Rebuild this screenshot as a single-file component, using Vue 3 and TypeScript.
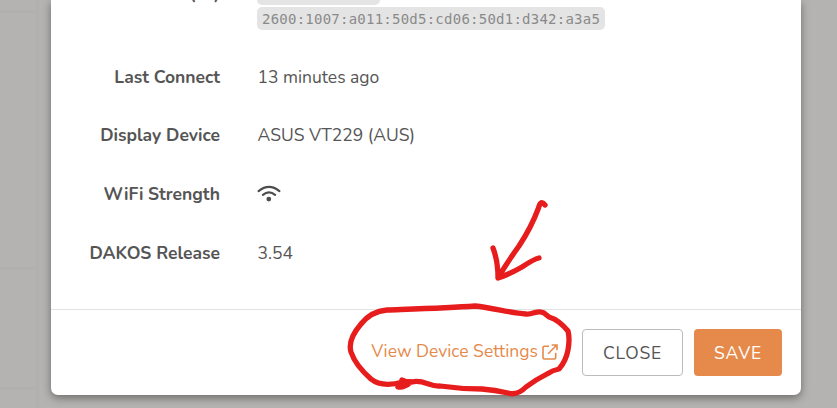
<script setup lang="ts">
interface Row {
  label: string
  value?: string
  key: string
}

const rows: Row[] = [
  { key: 'connect', label: 'Last Connect', value: '13 minutes ago' },
  { key: 'display', label: 'Display Device', value: 'ASUS VT229 (AUS)' },
  { key: 'wifi', label: 'WiFi Strength' },
  { key: 'release', label: 'DAKOS Release', value: '3.54' },
]
const address = '2600:1007:a011:50d5:cd06:50d1:d342:a3a5'
</script>

<template>
  <main class="page">
    <aside class="backdrop">
      <div class="tile first"></div>
      <div class="tile tall"></div>
      <div class="tile middle"></div>
      <div class="tile last"></div>
    </aside>
    <section class="modal">
      <div class="body">
        <div class="row addresses">
          <div class="label"><span class="ip">(es)</span></div>
          <div class="chips">
            <code class="chip short"></code>
            <code class="chip">{{ address }}</code>
          </div>
        </div>
        <div v-for="row in rows" :key="row.key" class="row" :class="row.key">
          <div class="label"><span>{{ row.label }}</span></div>
          <div class="value">
            <span v-if="row.value">{{ row.value }}</span>
            <svg v-else class="wifi-icon" viewBox="0 0 24 18" width="24" height="18">
              <path d="M1.6 6.1Q12 -2.3 22.4 6.1M5.9 9.8Q12 5 18.1 9.8" />
              <circle cx="11.8" cy="14.1" r="2.4" />
            </svg>
          </div>
        </div>
      </div>
      <footer class="footer">
        <a class="link">
          <span>View Device Settings</span>
          <svg viewBox="0 0 16 16" width="16" height="16">
            <path d="M7 2.2H2.2Q1 2.2 1 3.4V13.8Q1 15 2.2 15H12.5Q13.7 15 13.7 13.8V8.8M6.2 9.8L14.5 1.3M9.7 1H15V6.2" />
          </svg>
        </a>
        <button class="button close"><span>CLOSE</span></button>
        <button class="button save"><span>SAVE</span></button>
      </footer>
    </section>
    <svg class="markup" viewBox="0 0 837 408" width="837" height="408">
      <path d="M545 205Q541 199 538.5 208Q531 228 519 246Q506 264 498 278Q498 261 493 248M498 278Q508 275 522 267Q534 259 539 258" />
      <path d="M403 382C388 386 377 384 371 379C363 372 354 361 351 352C348 342 355 331 361 324C368 315 376 311 387 310C414 309 448 308 475 306C494 308 510 313 526 314C533 315 538 309 544 313L549 317C556 319 563 325 568 331Q570 339 568 350Q566 361 559 369Q553 370 547 374Q535 380 526 387Q517 396 508 393C499 391 494 390 482 389Q461 389 440 386C430 387 423 379 412 382Q404 382 398 387Q404 388 411 382Q405 382 402 380" />
    </svg>
  </main>
</template>

<style>
body {
  margin: 0;
  overflow: hidden;
}
</style>

<style scoped>
.page {
  position: relative;
  width: 837px;
  height: 408px;
  overflow: hidden;
  display: flex;
  background: #b4b3b1;
  color: #555;
  font-family: Nunito, Lato, sans-serif;
  font-size: 17.5px;
}
.backdrop {
  width: 51px;
  flex: none;
  display: flex;
  flex-direction: column;
}
.tile {
  box-sizing: border-box;
  width: 39px;
  flex: none;
  border-right: 3px solid #b1b0ae;
  border-bottom: 3px solid #b1b0ae;
}
.first { height: 13px; }
.tall { height: 257px; }
.middle { height: 120px; }
.last { height: 30px; }
.modal {
  width: 750px;
  height: 395px;
  flex: none;
  display: flex;
  flex-direction: column;
  background: #fff;
  border-radius: 0 0 7px 7px;
  box-shadow: 0 3px 9px rgba(0, 0, 0, 0.4);
}
.body {
  height: 309px;
  flex: none;
  display: flex;
  flex-direction: column;
}
.row {
  box-sizing: border-box;
  display: grid;
  grid-template-columns: 169px 1fr;
  column-gap: 37.5px;
  height: 58.67px;
  flex: none;
  align-items: center;
  white-space: nowrap;
}
.row.display {
  height: 58px;
  padding-bottom: 2px;
}
.row.wifi { height: 59px; }
.row.release { height: 59px; }
.row.addresses {
  height: 48px;
  align-items: start;
}
.label {
  font-weight: 700;
  text-align: right;
}
.ip {
  display: block;
  margin: -17px 0 0;
  line-height: 20px;
}
.chips {
  display: flex;
  flex-direction: column;
  align-items: flex-start;
  gap: 2px;
  margin: -18px 0 0 -0.5px;
}
.chip {
  box-sizing: border-box;
  height: 23px;
  padding: 0 5px;
  border-radius: 5px;
  background: #e4e4e4;
  color: #8a8a8a;
  font: 14px/24px Consolas, "DejaVu Sans Mono", monospace;
  width: 348px;
  letter-spacing: 0.24px;
}
.short { width: 123px; }
.value { line-height: 24px; }
.wifi-icon {
  display: block;
  margin-left: -0.5px;
  fill: #4d4d4d;
}
.wifi-icon path {
  fill: none;
  stroke: #4d4d4d;
  stroke-width: 2.2;
  stroke-linecap: round;
}
.footer {
  box-sizing: border-box;
  height: 86px;
  border-top: 1px solid #e1e1e1;
  display: flex;
  justify-content: flex-end;
  align-items: center;
  padding-right: 19px;
}
.link {
  display: flex;
  align-items: center;
  gap: 4px;
  margin: 0 24px 3px 0;
  color: #e68a4b;
  white-space: nowrap;
}
.link svg {
  margin-top: 1px;
  fill: none;
  stroke: #e68a4b;
  stroke-width: 1.6;
}
.button {
  box-sizing: border-box;
  height: 47px;
  padding: 1px 0 0;
  border-radius: 4px;
  font: inherit;
  letter-spacing: 0.8px;
}
.close {
  width: 101px;
  margin-right: 11px;
  border: 1px solid #bbb;
  background: #fff;
  color: #555;
}
.save {
  width: 88px;
  border: 0;
  background: #e68a4b;
  color: #fff;
}
.markup {
  position: absolute;
  inset: 0;
  pointer-events: none;
  fill: none;
  stroke: #e71c1c;
  stroke-width: 5.3;
  stroke-linecap: round;
  stroke-linejoin: round;
}
</style>
